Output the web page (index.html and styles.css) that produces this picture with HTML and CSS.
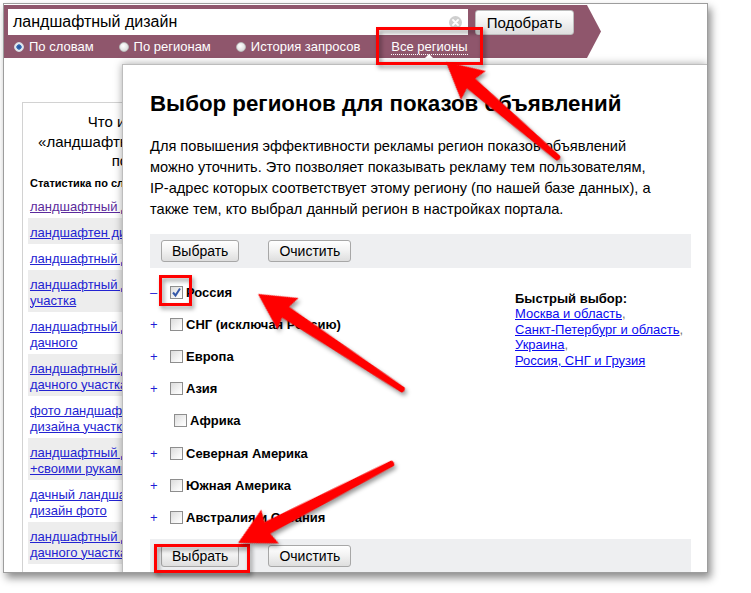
FILE: index.html
```html
<!DOCTYPE html>
<html lang="ru">
<head>
<meta charset="utf-8">
<title>Выбор регионов</title>
<link rel="stylesheet" href="styles.css">
</head>
<body>
<div class="shot">
  <div class="bar">
    <div class="search-row">
      <div class="search">
        <span class="query">ландшафтный дизайн</span>
        <svg class="clear" width="13" height="13" viewBox="0 0 13 13"><circle cx="6.5" cy="6.5" r="6.5" fill="#cfcfcf"/><path d="M4 4 L9 9 M9 4 L4 9" stroke="#fff" stroke-width="1.8" stroke-linecap="round"/></svg>
      </div>
      <button class="btn btn-go">Подобрать</button>
    </div>
    <div class="modes">
      <span class="mode"><span class="radio on"></span>По словам</span>
      <span class="mode"><span class="radio"></span>По регионам</span>
      <span class="mode"><span class="radio"></span>История запросов</span>
      <a class="regions">Все регионы</a>
    </div>
    <span class="notch"></span>
  </div>

  <div class="leftcol">
    <div class="lc-head">Что искали со словами<br>«ландшафтный дизайн» — 1 154 215<br>показов в месяц</div>
    <div class="lc-label">Статистика по словам</div>
    <ul class="lc-list">
      <li><a class="visited">ландшафтный дизайн</a></li>
      <li><a>ландшафтен дизайн</a></li>
      <li><a>ландшафтный дизайн сада</a></li>
      <li><a>ландшафтный дизайн участка</a></li>
      <li><a>ландшафтный дизайн дачного</a></li>
      <li><a>ландшафтный дизайн дачного участка</a></li>
      <li><a>фото ландшафтного дизайна участка</a></li>
      <li><a>ландшафтный дизайн +своими руками</a></li>
      <li><a>дачный ландшафтный дизайн фото</a></li>
      <li><a>ландшафтный дизайн дачного участка фото</a></li>
    </ul>
  </div>

  <div class="dialog">
    <h1 class="dlg-title">Выбор регионов для показов объявлений</h1>
    <p class="dlg-text">Для повышения эффективности рекламы регион показов объявлений<br>можно уточнить. Это позволяет показывать рекламу тем пользователям,<br>IP-адрес которых соответствует этому региону (по нашей базе данных), а<br>также тем, кто выбрал данный регион в настройках портала.</p>
    <div class="toolbar">
      <button class="btn btn-sm">Выбрать</button>
      <button class="btn btn-sm">Очистить</button>
    </div>
    <div class="regions-area">
      <ul class="tree">
        <li class="node"><span class="tog">–</span><span class="cb checked"><svg width="11" height="11" viewBox="0 0 11 11"><path d="M2 5.5 L4.5 8.5 L9 1.5" fill="none" stroke="#3558a8" stroke-width="2"/></svg></span><span class="lbl">Россия</span></li>
        <li class="node"><span class="tog">+</span><span class="cb"></span><span class="lbl">СНГ (исключая Россию)</span></li>
        <li class="node"><span class="tog">+</span><span class="cb"></span><span class="lbl">Европа</span></li>
        <li class="node"><span class="tog">+</span><span class="cb"></span><span class="lbl">Азия</span></li>
        <li class="node leaf"><span class="cb"></span><span class="lbl">Африка</span></li>
        <li class="node"><span class="tog">+</span><span class="cb"></span><span class="lbl">Северная Америка</span></li>
        <li class="node"><span class="tog">+</span><span class="cb"></span><span class="lbl">Южная Америка</span></li>
        <li class="node"><span class="tog">+</span><span class="cb"></span><span class="lbl">Австралия и Океания</span></li>
      </ul>
      <div class="quick">
        <div class="quick-title">Быстрый выбор:</div>
        <div><a>Москва и область</a>,</div>
        <div><a>Санкт-Петербург и область</a>,</div>
        <div><a>Украина</a>,</div>
        <div><a>Россия, СНГ и Грузия</a></div>
      </div>
    </div>
    <div class="toolbar footer">
      <button class="btn btn-sm">Выбрать</button>
      <button class="btn btn-sm">Очистить</button>
    </div>
  </div>
</div>

<svg class="marks" width="751" height="593" viewBox="0 0 751 593">
  <g class="shadowed" fill="none" stroke="#ff0000" stroke-width="3">
    <rect x="377.5" y="28.5" width="104" height="35"/>
    <rect x="160.5" y="276.5" width="30" height="28"/>
    <rect x="155.5" y="545.5" width="93" height="26"/>
  </g>
  <g class="shadowed" fill="#ff0000">
    <path transform="translate(446 62) rotate(40.6)" d="M0 0 L36 -19 L33 -6.5 L148 -3 Q151 0 148 3 L33 6.5 L36 19 Z"/>
    <path transform="translate(258 294) rotate(33.5)" d="M0 0 L36 -19 L33 -6.5 L174 -3 Q177 0 174 3 L33 6.5 L36 19 Z"/>
    <path transform="translate(238 543) rotate(-27.3)" d="M0 0 L36 -19 L33 -6.5 L174 -3 Q177 0 174 3 L33 6.5 L36 19 Z"/>
  </g>
</svg>
</body>
</html>
```

FILE: styles.css
```css
* { box-sizing: border-box; }
html, body { margin: 0; padding: 0; background: #fff; }
body {
  font-family: "Liberation Sans", Arial, sans-serif;
  color: #000;
  width: 751px;
  height: 593px;
  overflow: hidden;
  position: relative;
}
ul { list-style: none; margin: 0; padding: 0; }
a { cursor: pointer; }

.shot {
  margin: 3px 0 0 3px;
  width: 705px;
  height: 570px;
  border: 1px solid #9d9d9d;
  position: relative;
  overflow: hidden;
  background: #fff;
  box-shadow: 3px 5px 8px rgba(0,0,0,0.45);
}

/* top bar */
.bar {
  position: relative;
  margin-top: 1px;
  width: 597px;
  height: 53px;
  background: #8f566c;
  clip-path: polygon(0 0, 583px 0, 597px 26.5px, 583px 53px, 0 53px);
}
.search-row {
  display: flex;
  align-items: flex-end;
  padding: 4px 0 0 4px;
}
.search {
  width: 460px;
  height: 26px;
  background: #fff;
  display: flex;
  align-items: center;
  padding-left: 5px;
  font-size: 16px;
}
.clear { margin-left: auto; margin-right: 6px; }
.btn {
  font-family: "Liberation Sans", Arial, sans-serif;
  color: #000;
  border: 1px solid #a7a7a7;
  border-radius: 3px;
  background: linear-gradient(#ffffff, #f3f3f3 45%, #dedede);
  padding: 0 10px;
  margin: 0;
}
.btn-go {
  margin-left: 7px;
  width: 99px;
  height: 25px;
  font-size: 15px;
  border-color: #bdbdbd;
}
.modes {
  display: flex;
  align-items: center;
  margin-top: 4px;
  padding-left: 10px;
  font-size: 13px;
  line-height: 16px;
  color: #fff;
}
.mode { display: flex; align-items: center; margin-right: 25px; }
.radio {
  width: 10px;
  height: 10px;
  border-radius: 50%;
  margin-right: 5px;
  border: 1px solid #b9b9b9;
  background: radial-gradient(circle at 40% 35%, #ffffff, #d2d2d2);
}
.radio.on {
  border-color: #d6dbe2;
  background: radial-gradient(circle, #1d4d92 0, #3c73bd 2.4px, #eef2f7 3px, #c9ced5 100%);
}
.regions {
  margin-left: 6px;
  color: #fff;
  border-bottom: 1px dotted #fff;
  line-height: 15px;
}
.notch {
  position: absolute;
  left: 421px;
  bottom: 0;
  width: 0;
  height: 0;
  border-left: 4px solid transparent;
  border-right: 4px solid transparent;
  border-bottom: 4px solid #fff;
}

/* left column */
.leftcol {
  margin: 44px 0 0 18px;
  width: 290px;
  height: 480px;
  border-left: 1px solid #d2d2d2;
  border-top: 1px solid #d2d2d2;
  padding: 9px 0 0 5px;
}
.lc-head {
  margin-left: -1px;
  width: 283px;
  text-align: center;
  font-size: 15px;
  line-height: 19.5px;
}
.lc-label {
  margin-top: 5px;
  padding-left: 2px;
  font-size: 11px;
  font-weight: bold;
  line-height: 14px;
}
.lc-list { margin-top: 2px; width: 200px; }
.lc-list li {
  padding: 7px 2px 3px;
  line-height: 16px;
  font-size: 13px;
}
.lc-list li:nth-child(even) { background: #ededed; }
.lc-list a {
  display: inline-block;
  width: 172px;
  color: #2323d2;
  text-decoration: underline;
}
.lc-list a.visited { color: #5b2a9c; }

/* dialog */
.dialog {
  position: absolute;
  left: 118px;
  top: 60px;
  right: 0;
  height: 530px;
  background: #fff;
  border: 1px solid #bdbdbd;
  border-right: 0;
  box-shadow: 0 0 8px rgba(0,0,0,0.35);
  padding: 25px 16px 0 27px;
}
.dlg-title {
  margin: 0;
  font-size: 22.3px;
  line-height: 28px;
  font-weight: bold;
}
.dlg-text {
  margin: 18px 0 0;
  font-size: 14.6px;
  line-height: 21px;
  white-space: nowrap;
}
.toolbar {
  margin-top: 14px;
  height: 34px;
  background: #eeeff1;
  display: flex;
  align-items: flex-start;
  padding: 6px 0 0 11px;
  gap: 29px;
}
.btn-sm {
  height: 22px;
  font-size: 14px;
  padding: 0 10px;
}
.regions-area {
  display: flex;
  margin-top: 8px;
}
.tree { width: 365px; }
.node {
  height: 32.2px;
  display: flex;
  align-items: center;
}
.tog {
  width: 20px;
  color: #1e1ed6;
  font-size: 13px;
  padding-left: 0;
}
.leaf { padding-left: 24px; }
.cb {
  width: 13px;
  height: 13px;
  margin-right: 3px;
  border: 1px solid #8e8e8e;
  background: linear-gradient(135deg, #dcdcdc, #f7f7f7 70%, #fff);
  display: flex;
  align-items: center;
  justify-content: center;
}
.lbl {
  font-size: 13px;
  font-weight: bold;
}
.quick {
  padding-top: 14.5px;
  font-size: 13px;
  line-height: 15.5px;
  color: #777;
}
.quick-title { font-weight: bold; color: #000; }
.quick a { color: #0a0af0; text-decoration: underline; }
.footer { margin-top: 5px; padding-top: 6px; }

/* annotations */
.marks {
  position: absolute;
  left: 0;
  top: 0;
  pointer-events: none;
}
.shadowed { filter: drop-shadow(2px 3px 2px rgba(0,0,0,0.4)); }
```
